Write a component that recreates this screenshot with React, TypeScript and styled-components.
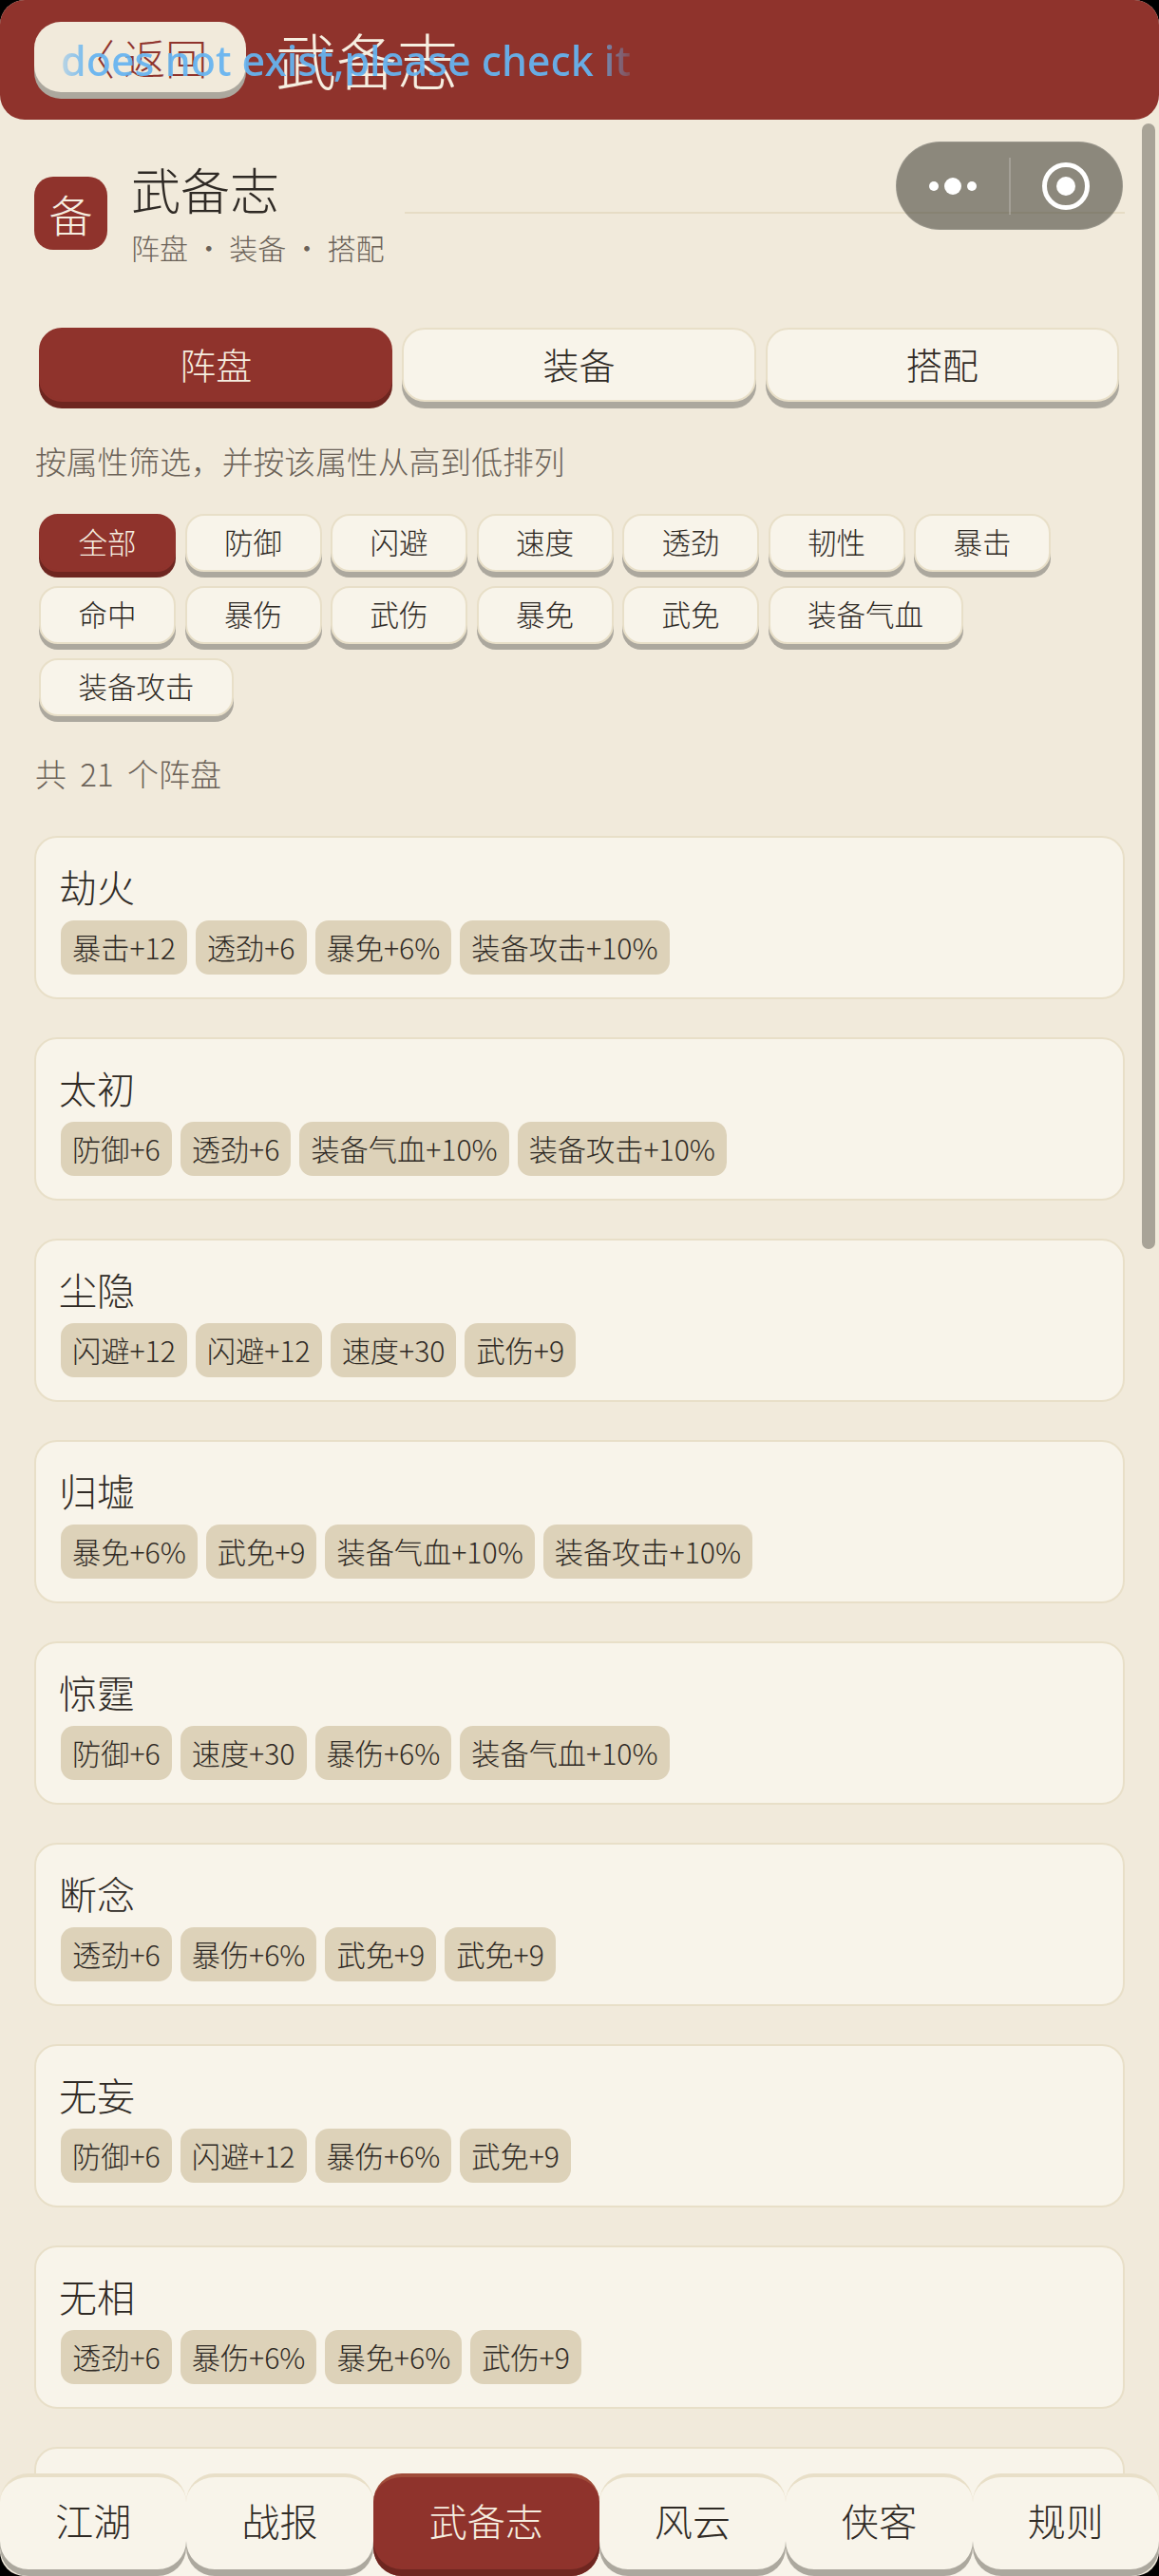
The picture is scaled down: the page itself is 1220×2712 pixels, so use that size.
import * as React from 'react'
import styled, { createGlobalStyle } from 'styled-components'

const Global = createGlobalStyle`
  html, body {
    margin: 0;
    background: #000;
  }
  * {
    box-sizing: border-box;
  }
`

const Phone = styled.div`
  background: #f1eadb;
  border-radius: 26px;
  color: #2f2a25;
  font-family: "Noto Sans CJK SC", "Noto Sans", sans-serif;
  font-weight: 300;
  height: 2712px;
  overflow: hidden;
  position: relative;
  width: 1220px;
`

const Header = styled.header`
  align-items: flex-start;
  background: #8f332c;
  border-radius: 0 0 26px 26px;
  display: flex;
  gap: 31px;
  height: 126px;
  padding: 23px 0 0 36px;
`

const BackButton = styled.div`
  background: #f1eadb;
  border-radius: 28px;
  box-shadow: 0 7px 0 #aca89e;
  color: #8f332c;
  font-size: 44px;
  height: 74px;
  line-height: 74px;
  text-align: center;
  white-space: pre;
  width: 223px;
`

const HeaderTitle = styled.div`
  color: #f6eee0;
  font-size: 64px;
  line-height: 76px;
`

const Toast = styled.div`
  color: rgba(102, 180, 240, 0.94);
  font-family: "Noto Sans", sans-serif;
  font-size: 43px;
  font-weight: 500;
  left: 64px;
  line-height: 60px;
  mask-image: linear-gradient(90deg, rgba(0,0,0,.4) 0, #000 5%, #000 93%, rgba(0,0,0,.2) 100%);
  position: absolute;
  top: 34px;
  white-space: nowrap;
`

const Capsule = styled.div`
  align-items: center;
  background: rgba(60, 58, 50, 0.56);
  border: 1px solid rgba(255, 255, 255, 0.12);
  border-radius: 47px;
  display: flex;
  height: 93px;
  left: 943px;
  position: absolute;
  top: 149px;
  width: 239px;
`

const CapsuleSide = styled.div`
  align-items: center;
  display: flex;
  flex: 1;
  height: 100%;
  justify-content: center;
`

const CapsuleBar = styled.div`
  background: rgba(255, 255, 255, 0.2);
  height: 60px;
  width: 2px;
`

const ScrollThumb = styled.div`
  background: rgba(60, 58, 50, 0.4);
  border-radius: 7px;
  height: 1185px;
  left: 1202px;
  position: absolute;
  top: 130px;
  width: 14px;
`

const Intro = styled.section`
  align-items: flex-start;
  display: flex;
  gap: 25px;
  height: 219px;
  padding: 41px 36px 0;
  position: relative;
`

const IntroIcon = styled.div`
  background: #8f332c;
  border-radius: 20px;
  color: #f6eee0;
  font-size: 46px;
  height: 77px;
  line-height: 77px;
  margin-top: 19px;
  text-align: center;
  width: 77px;
`

const IntroText = styled.div`
  display: flex;
  flex-direction: column;
  flex: 1;
`

const IntroTitleRow = styled.div`
  align-items: center;
  display: flex;
  gap: 133px;
`

const IntroTitle = styled.div`
  color: #2f2a25;
  font-size: 52px;
  line-height: 64px;
  white-space: nowrap;
`

const IntroRule = styled.div`
  background: #e6dcc5;
  flex: 1;
  height: 2px;
  margin: 50px 0 0 -1px;
`

const IntroSub = styled.div`
  color: #6b6258;
  font-size: 30px;
  line-height: 40px;
  margin-top: 9px;
  white-space: pre;
`

const Tabs = styled.div`
  display: flex;
  gap: 10px;
  padding: 0 42px 0 41px;
`

const Tab = styled.div<{ $active?: boolean }>`
  background: ${(p) => (p.$active ? '#8f332c' : '#f8f4ea')};
  border: 2px solid ${(p) => (p.$active ? '#8f332c' : '#e8dfc8')};
  border-radius: 24px;
  box-shadow: 0 7px 0 ${(p) => (p.$active ? '#6e2620' : '#aca89e')};
  color: ${(p) => (p.$active ? '#f6eee0' : '#2f2a25')};
  flex: 1;
  font-size: 38px;
  height: 78px;
  line-height: 72px;
  text-align: center;
`

const Hint = styled.div`
  color: #6b6258;
  font-size: 32.8px;
  line-height: 44px;
  margin: 40px 0 0 37px;
`

const Chips = styled.div`
  display: flex;
  flex-wrap: wrap;
  gap: 15px 9.5px;
  margin-top: 34px;
  padding: 0 100px 0 41px;
`

const Chip = styled.div<{ $active?: boolean }>`
  background: ${(p) => (p.$active ? '#8f332c' : '#f8f4ea')};
  border: 2px solid ${(p) => (p.$active ? '#8f332c' : '#e8dfc8')};
  border-radius: 20px;
  box-shadow: 0 6px 0 ${(p) => (p.$active ? '#6e2620' : '#aca89e')};
  color: ${(p) => (p.$active ? '#f6eee0' : '#2f2a25')};
  font-size: 30.5px;
  height: 61px;
  line-height: 55px;
  padding: 0 39.5px;
`

const Count = styled.div`
  color: #6b6258;
  font-size: 33px;
  line-height: 44px;
  margin: 38px 0 0 37px;
  word-spacing: 7px;
`

const List = styled.div`
  display: flex;
  flex-direction: column;
  gap: 40px;
  margin-top: 44px;
  padding: 0 36px;
`

const Card = styled.div`
  background: #f8f4ea;
  border: 2px solid #e8dfc8;
  border-radius: 24px;
  height: 172px;
  padding: 26px 24px 0;
`

const CardTitle = styled.div`
  color: #2f2a25;
  font-size: 40px;
  line-height: 50px;
`

const Tags = styled.div`
  display: flex;
  gap: 9px;
  margin: 11px 0 0 2px;
`

const Tag = styled.div`
  background: #ddd2b9;
  border-radius: 14px;
  color: #2f2a25;
  font-size: 30.2px;
  height: 57px;
  line-height: 57px;
  padding: 0 12px;
  white-space: nowrap;
`

const Nav = styled.nav`
  bottom: 0;
  display: flex;
  height: 108px;
  left: 0;
  position: absolute;
  right: 0;
`

const NavButton = styled.div<{ $active?: boolean }>`
  background: ${(p) => (p.$active ? '#8f332c' : '#f8f4ea')};
  border-radius: 30px;
  border-top: 4px solid ${(p) => (p.$active ? '#a04c3a' : '#e8dfc8')};
  box-shadow: inset 0 -7px 0 ${(p) => (p.$active ? '#6e2620' : '#aca89e')};
  color: ${(p) => (p.$active ? '#f6eee0' : '#2f2a25')};
  flex: ${(p) => (p.$active ? '0 0 238px' : '0 0 196.4px')};
  font-size: 40px;
  line-height: 90px;
  text-align: center;
`

const filters = ['全部', '防御', '闪避', '速度', '透劲', '韧性', '暴击', '命中', '暴伤', '武伤', '暴免', '武免', '装备气血', '装备攻击']

const cards = [
  { name: '劫火', tags: ['暴击+12', '透劲+6', '暴免+6%', '装备攻击+10%'] },
  { name: '太初', tags: ['防御+6', '透劲+6', '装备气血+10%', '装备攻击+10%'] },
  { name: '尘隐', tags: ['闪避+12', '闪避+12', '速度+30', '武伤+9'] },
  { name: '归墟', tags: ['暴免+6%', '武免+9', '装备气血+10%', '装备攻击+10%'] },
  { name: '惊霆', tags: ['防御+6', '速度+30', '暴伤+6%', '装备气血+10%'] },
  { name: '断念', tags: ['透劲+6', '暴伤+6%', '武免+9', '武免+9'] },
  { name: '无妄', tags: ['防御+6', '闪避+12', '暴伤+6%', '武免+9'] },
  { name: '无相', tags: ['透劲+6', '暴伤+6%', '暴免+6%', '武伤+9'] },
  { name: '', tags: [] },
]

const navItems = ['江湖', '战报', '武备志', '风云', '侠客', '规则']

export default function App() {
  return (
    <>
      <Global />
      <Phone>
        <Header>
          <BackButton>〈 返回</BackButton>
          <HeaderTitle>武备志</HeaderTitle>
        </Header>
        <Intro>
          <IntroIcon>备</IntroIcon>
          <IntroText>
            <IntroTitleRow>
              <IntroTitle>武备志</IntroTitle>
              <IntroRule />
            </IntroTitleRow>
            <IntroSub>阵盘 · 装备 · 搭配</IntroSub>
          </IntroText>
        </Intro>
        <Tabs>
          <Tab $active>阵盘</Tab>
          <Tab>装备</Tab>
          <Tab>搭配</Tab>
        </Tabs>
        <Hint>按属性筛选，并按该属性从高到低排列</Hint>
        <Chips>
          {filters.map((f, i) => (
            <Chip key={f} $active={i === 0}>{f}</Chip>
          ))}
        </Chips>
        <Count>共 21 个阵盘</Count>
        <List>
          {cards.map((c, i) => (
            <Card key={i}>
              <CardTitle>{c.name}</CardTitle>
              <Tags>
                {c.tags.map((t, j) => (
                  <Tag key={j}>{t}</Tag>
                ))}
              </Tags>
            </Card>
          ))}
        </List>
        <Toast>does not exist,please check it</Toast>
        <Capsule>
          <CapsuleSide>
            <svg width="52" height="20" viewBox="0 0 52 20">
              <circle cx="6" cy="10" r="5" fill="#fff" />
              <circle cx="26" cy="10" r="9" fill="#fff" />
              <circle cx="46" cy="10" r="5" fill="#fff" />
            </svg>
          </CapsuleSide>
          <CapsuleBar />
          <CapsuleSide>
            <svg width="52" height="52" viewBox="0 0 52 52">
              <circle cx="26" cy="26" r="22.5" fill="none" stroke="#fff" strokeWidth="5" />
              <circle cx="26" cy="26" r="10" fill="#fff" />
            </svg>
          </CapsuleSide>
        </Capsule>
        <ScrollThumb />
        <Nav>
          {navItems.map((n) => (
            <NavButton key={n} $active={n === '武备志'}>{n}</NavButton>
          ))}
        </Nav>
      </Phone>
    </>
  )
}
